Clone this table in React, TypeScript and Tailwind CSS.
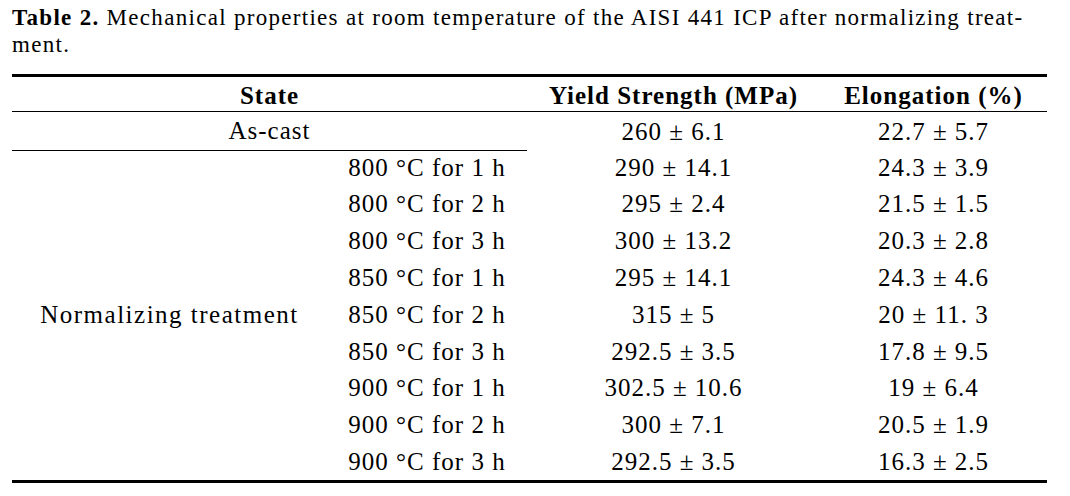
import React from "react";

const rows: [string, string, string][] = [
  ["800 °C for 1 h", "290 ± 14.1", "24.3 ± 3.9"],
  ["800 °C for 2 h", "295 ± 2.4", "21.5 ± 1.5"],
  ["800 °C for 3 h", "300 ± 13.2", "20.3 ± 2.8"],
  ["850 °C for 1 h", "295 ± 14.1", "24.3 ± 4.6"],
  ["850 °C for 2 h", "315 ± 5", "20 ± 11. 3"],
  ["850 °C for 3 h", "292.5 ± 3.5", "17.8 ± 9.5"],
  ["900 °C for 1 h", "302.5 ± 10.6", "19 ± 6.4"],
  ["900 °C for 2 h", "300 ± 7.1", "20.5 ± 1.9"],
  ["900 °C for 3 h", "292.5 ± 3.5", "16.3 ± 2.5"],
];

export default function App() {
  return (
    <div
      className="w-[1070px] h-[496px] bg-white text-black overflow-hidden"
      style={{ fontFamily: '"Liberation Serif", "Times New Roman", serif' }}
    >
      <div className="pl-[12px] pt-[4px] text-[23px] leading-[27px] tracking-[1.3px] whitespace-nowrap">
        <span className="font-bold">Table 2.</span> Mechanical properties at room temperature of the AISI 441 ICP after normalizing treat-
        <br />
        ment.
      </div>
      <div className="ml-[12px] mt-[16px] w-[1035px] border-t-[3px] border-b-[3px] border-black text-[25px] tracking-[1px]">
        <div className="grid grid-cols-[315px_200px_293px_227px] h-[35px] border-b border-black font-bold items-center text-center">
          <div className="col-span-2">State</div>
          <div>Yield Strength (MPa)</div>
          <div>Elongation (%)</div>
        </div>
        <div className="grid grid-cols-[315px_200px_293px_227px] h-[37px] items-center text-center">
          <div className="col-span-2 h-full flex items-center justify-center border-b border-black">As-cast</div>
          <div>260 ± 6.1</div>
          <div>22.7 ± 5.7</div>
        </div>
        <div className="grid grid-cols-[315px_200px_293px_227px] grid-rows-[repeat(9,36.8px)] items-center text-center">
          <div className="row-span-9 flex items-center justify-center h-full tracking-[1.5px]">Normalizing treatment</div>
          {rows.map(([a, b, c]) => (
            <React.Fragment key={a}>
              <div>{a}</div>
              <div>{b}</div>
              <div>{c}</div>
            </React.Fragment>
          ))}
        </div>
      </div>
    </div>
  );
}
